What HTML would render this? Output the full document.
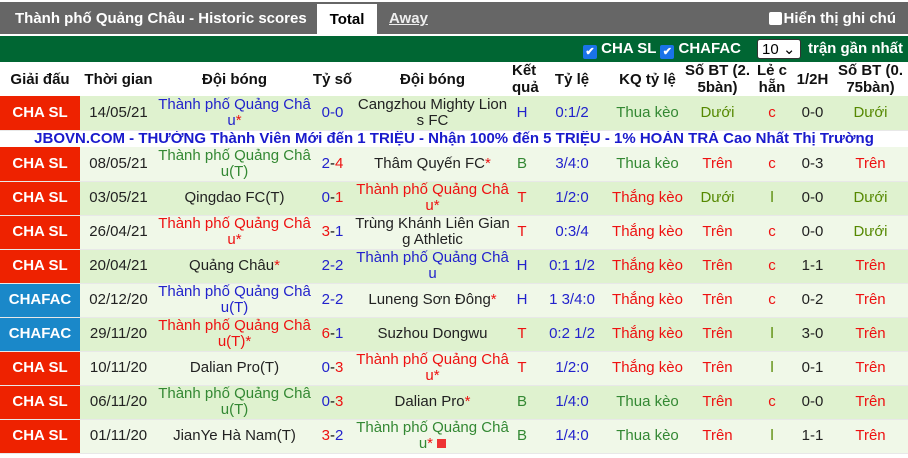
<!DOCTYPE html>
<html><head><meta charset="utf-8"><style>
body{margin:0;width:908px;height:458px;overflow:hidden;background:#fff;font-family:"Liberation Sans",Arial,sans-serif;font-size:15px}
.top{position:absolute;left:0;top:2px;width:908px;height:32px;background:#666;color:#fff;font-weight:bold;font-size:15px}
.top .t1{position:absolute;left:15px;top:8px}
.tab{position:absolute;top:2px;height:32px;background:#fff;color:#000;left:317px;width:60px;text-align:center;line-height:32px}
.away{position:absolute;left:389px;top:8px;text-decoration:underline;color:#eee}
.note{position:absolute;right:12px;top:8px}
.cb{display:inline-block;width:13px;height:13px;background:#fff;border-radius:2px;vertical-align:-2px;margin-right:2px}
.green{position:absolute;left:0;top:36px;width:908px;height:26px;background:#006633;color:#fff;font-weight:bold;font-size:15px}
.chk{display:inline-block;width:14px;height:14px;background:#1a73e8;border-radius:2px;vertical-align:-2px;color:#fff;font-size:11px;line-height:14px;text-align:center}
table{position:absolute;left:0;top:62px;border-collapse:collapse;table-layout:fixed;width:908px}
td{text-align:center;padding:0;line-height:16px;border-bottom:1px solid #e8e8e8;overflow:hidden;white-space:nowrap}
th{padding:0;font-size:15px;line-height:17px;color:#111}
tr{height:34px}
tr.ban{height:17px}
.l{color:#fff;font-weight:bold;font-size:15px;background:#ee2200}
tr.a td{background:#dff2cf}
tr.b td{background:#f0f8e8}
td.l{background:#ee2200!important}td.f{background:#1a88c9!important}
.bl{color:#2222cc}.gr{color:#338833}.rd{color:#ee1111}.ol{color:#558800}.k{color:#222}
.ban td{line-height:16px;background:#fff;color:#1a1acc;font-weight:bold;font-size:15px;border:none}
.sq{display:inline-block;width:9px;height:9px;background:#e33;vertical-align:0}
</style></head><body>
<div class="top"><span class="t1">Thành phố Quảng Châu - Historic scores</span><div class="tab">Total</div><span class="away">Away</span><span class="note"><span class="cb"></span>Hiển thị ghi chú</span></div>
<div class="green"><span style="position:absolute;left:583px;top:4px"><span class="chk">✔</span> CHA SL <span class="chk">✔</span> CHAFAC</span>
<span style="position:absolute;left:757px;top:3px;width:44px;height:20px;background:#fff;border:1px solid #333;border-radius:3px;color:#000;font-weight:normal;font-size:15px;line-height:20px;padding-left:4px;box-sizing:border-box">10 ⌄</span>
<span style="position:absolute;left:808px;top:4px">trận gần nhất</span></div>
<table>
<colgroup><col style="width:80px"><col style="width:77px"><col style="width:155px"><col style="width:41px"><col style="width:159px"><col style="width:20px"><col style="width:80px"><col style="width:71px"><col style="width:69px"><col style="width:40px"><col style="width:41px"><col style="width:75px"></colgroup>
<tr class="h"><th>Giải đấu</th><th>Thời gian</th><th>Đội bóng</th><th>Tỷ số</th><th>Đội bóng</th><th>Kết quả</th><th>Tỷ lệ</th><th>KQ tỷ lệ</th><th>Số BT (2.<br>5bàn)</th><th>Lẻ c<br>hẵn</th><th>1/2H</th><th>Số BT (0.<br>75bàn)</th></tr>
<tr class="a"><td class="l">CHA SL</td><td class="k">14/05/21</td><td class="bl">Thành phố Quảng Châ<br>u<span class="rd">*</span></td><td class="bl">0-0</td><td class="k">Cangzhou Mighty Lion<br>s FC</td><td class="bl">H</td><td class="bl">0:1/2</td><td class="gr">Thua kèo</td><td class="ol">Dưới</td><td class="rd">c</td><td class="k">0-0</td><td class="ol">Dưới</td></tr>
<tr class="ban"><td colspan="12">JBOVN.COM - THƯỞNG Thành Viên Mới đến 1 TRIỆU - Nhận 100% đến 5 TRIỆU - 1% HOÀN TRẢ Cao Nhất Thị Trường</td></tr>
<tr class="b"><td class="l">CHA SL</td><td class="k">08/05/21</td><td class="gr">Thành phố Quảng Châ<br>u(T)</td><td><span class="bl">2</span>-<span class="rd">4</span></td><td class="k">Thâm Quyến FC<span class="rd">*</span></td><td class="gr">B</td><td class="bl">3/4:0</td><td class="gr">Thua kèo</td><td class="rd">Trên</td><td class="rd">c</td><td class="k">0-3</td><td class="rd">Trên</td></tr>
<tr class="a"><td class="l">CHA SL</td><td class="k">03/05/21</td><td class="k">Qingdao FC(T)</td><td><span class="bl">0</span>-<span class="rd">1</span></td><td class="rd">Thành phố Quảng Châ<br>u*</td><td class="rd">T</td><td class="bl">1/2:0</td><td class="rd">Thắng kèo</td><td class="ol">Dưới</td><td class="ol">l</td><td class="k">0-0</td><td class="ol">Dưới</td></tr>
<tr class="b"><td class="l">CHA SL</td><td class="k">26/04/21</td><td class="rd">Thành phố Quảng Châ<br>u*</td><td><span class="rd">3</span>-<span class="bl">1</span></td><td class="k">Trùng Khánh Liên Gian<br>g Athletic</td><td class="rd">T</td><td class="bl">0:3/4</td><td class="rd">Thắng kèo</td><td class="rd">Trên</td><td class="rd">c</td><td class="k">0-0</td><td class="ol">Dưới</td></tr>
<tr class="a"><td class="l">CHA SL</td><td class="k">20/04/21</td><td class="k">Quảng Châu<span class="rd">*</span></td><td class="bl">2-2</td><td class="bl">Thành phố Quảng Châ<br>u</td><td class="bl">H</td><td class="bl">0:1 1/2</td><td class="rd">Thắng kèo</td><td class="rd">Trên</td><td class="rd">c</td><td class="k">1-1</td><td class="rd">Trên</td></tr>
<tr class="b"><td class="l f">CHAFAC</td><td class="k">02/12/20</td><td class="bl">Thành phố Quảng Châ<br>u(T)</td><td class="bl">2-2</td><td class="k">Luneng Sơn Đông<span class="rd">*</span></td><td class="bl">H</td><td class="bl">1 3/4:0</td><td class="rd">Thắng kèo</td><td class="rd">Trên</td><td class="rd">c</td><td class="k">0-2</td><td class="rd">Trên</td></tr>
<tr class="a"><td class="l f">CHAFAC</td><td class="k">29/11/20</td><td class="rd">Thành phố Quảng Châ<br>u(T)*</td><td><span class="rd">6</span>-<span class="bl">1</span></td><td class="k">Suzhou Dongwu</td><td class="rd">T</td><td class="bl">0:2 1/2</td><td class="rd">Thắng kèo</td><td class="rd">Trên</td><td class="ol">l</td><td class="k">3-0</td><td class="rd">Trên</td></tr>
<tr class="b"><td class="l">CHA SL</td><td class="k">10/11/20</td><td class="k">Dalian Pro(T)</td><td><span class="bl">0</span>-<span class="rd">3</span></td><td class="rd">Thành phố Quảng Châ<br>u*</td><td class="rd">T</td><td class="bl">1/2:0</td><td class="rd">Thắng kèo</td><td class="rd">Trên</td><td class="ol">l</td><td class="k">0-1</td><td class="rd">Trên</td></tr>
<tr class="a"><td class="l">CHA SL</td><td class="k">06/11/20</td><td class="gr">Thành phố Quảng Châ<br>u(T)</td><td><span class="bl">0</span>-<span class="rd">3</span></td><td class="k">Dalian Pro<span class="rd">*</span></td><td class="gr">B</td><td class="bl">1/4:0</td><td class="gr">Thua kèo</td><td class="rd">Trên</td><td class="rd">c</td><td class="k">0-0</td><td class="rd">Trên</td></tr>
<tr class="b"><td class="l">CHA SL</td><td class="k">01/11/20</td><td class="k">JianYe Hà Nam(T)</td><td><span class="rd">3</span>-<span class="bl">2</span></td><td class="gr">Thành phố Quảng Châ<br>u<span class="rd">*</span> <span class="sq"></span></td><td class="gr">B</td><td class="bl">1/4:0</td><td class="gr">Thua kèo</td><td class="rd">Trên</td><td class="ol">l</td><td class="k">1-1</td><td class="rd">Trên</td></tr>
</table>
</body></html>
